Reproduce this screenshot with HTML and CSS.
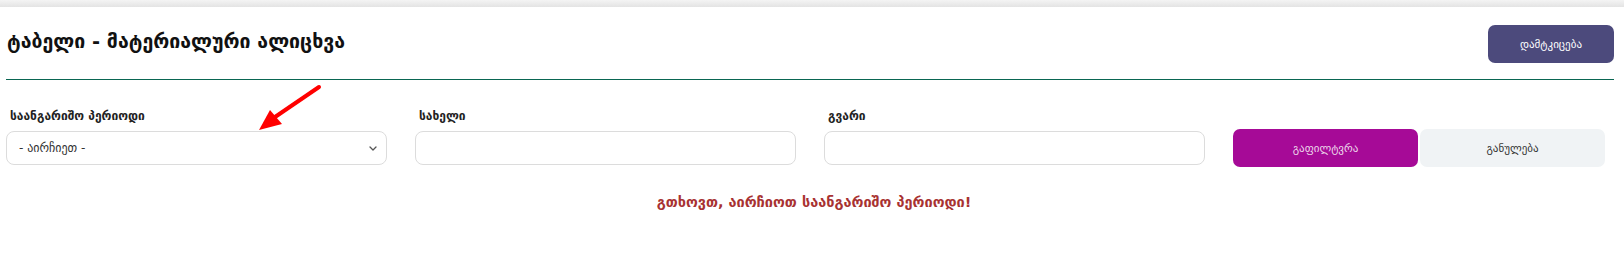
FILE: index.html
```html
<!DOCTYPE html>
<html lang="ka">

<head>
    <meta charset="UTF-8">
    <meta name="viewport" content="width=device-width, initial-scale=1.0">
    <title>ტაბელი - მატერიალური ალიცხვა</title>
    <link rel="stylesheet" href="styles.css">
</head>

<body>
    <div class="top-shade"></div>

    <div class="container">
        <div class="page-header">
            <h2 class="page-title">ტაბელი - მატერიალური ალიცხვა</h2>
            <button class="button confirm">დამტკიცება</button>
        </div>

        <div class="filters">
            <div class="field">
                <label for="period">საანგარიშო პერიოდი</label>
                <div class="select-wrap">
                    <select id="period">
                        <option>- აირჩიეთ -</option>
                    </select>
                    <svg class="chevron" width="8" height="5" viewBox="0 0 8 5" fill="none">
                        <path d="M1 1L4 4L7 1" stroke="#555" stroke-width="1.3" stroke-linecap="round" stroke-linejoin="round" />
                    </svg>
                </div>
            </div>

            <div class="field">
                <label for="first-name">სახელი</label>
                <input type="text" id="first-name">
            </div>

            <div class="field">
                <label for="last-name">გვარი</label>
                <input type="text" id="last-name">
            </div>

            <div class="filter-actions">
                <button class="button filter">გაფილტვრა</button>
                <button class="button reset">განულება</button>
            </div>
        </div>

        <p class="error-message">გთხოვთ, აირჩიოთ საანგარიშო პერიოდი!</p>

        <!-- annotation arrow -->
        <svg class="hint-arrow" width="80" height="60" viewBox="0 0 80 60" fill="none">
            <path d="M70 7L26 37" stroke="#f00" stroke-width="4" stroke-linecap="round" />
            <path d="M10 50L21 30L33 44Z" fill="#f00" />
        </svg>
    </div>
</body>

</html>
```

FILE: styles.css
```css
/* Reset and base styles */
* {
    margin: 0;
    padding: 0;
    box-sizing: border-box;
    font-family: 'DejaVu Sans', 'Noto Sans', sans-serif;
}

body {
    background-color: #fff;
    color: #222;
}

.top-shade {
    height: 7px;
    background: linear-gradient(#f4f4f4, #e3e3e3);
}

/* Container styles */
.container {
    position: relative;
    padding: 0 10px 0 6px;
}

/* Header */
.page-header {
    display: flex;
    justify-content: space-between;
    align-items: flex-start;
    padding-top: 18px;
    padding-bottom: 16px;
    border-bottom: 1px solid #0a6652;
}

.page-title {
    font-size: 19.5px;
    font-weight: 700;
    color: #111;
    padding-top: 5px;
    padding-left: 1px;
}

/* Buttons */
.button {
    border: none;
    border-radius: 7px;
    font-size: 11px;
    cursor: pointer;
    text-align: center;
}

.button.confirm {
    width: 126px;
    height: 38px;
    background-color: #4c4a7c;
    color: #fff;
}

.button.filter {
    width: 185px;
    height: 38px;
    background-color: #a60a97;
    color: #ecd6ea;
}

.button.reset {
    width: 185px;
    height: 38px;
    background-color: #f0f3f5;
    color: #333;
}

/* Filters */
.filters {
    display: grid;
    grid-template-columns: 381px 381px 381px 373px;
    column-gap: 28px;
    align-items: end;
    padding-top: 29px;
}

.field label {
    display: block;
    font-size: 12px;
    font-weight: 600;
    color: #222;
    padding-left: 4px;
    margin-bottom: 8px;
}

.field input,
.field select {
    display: block;
    width: 100%;
    height: 34px;
    border: 1px solid #dcdcdc;
    border-radius: 8px;
    background: #fff;
    font-size: 12px;
    color: #333;
    padding: 0 12px;
    appearance: none;
    outline: none;
}

.select-wrap {
    position: relative;
}

.chevron {
    position: absolute;
    right: 10px;
    top: 15px;
}

.filter-actions {
    display: flex;
    gap: 2px;
    margin-bottom: -2px;
}

.error-message {
    text-align: center;
    font-size: 14.5px;
    font-weight: 700;
    color: #a83232;
    margin-top: 29px;
    padding-left: 8px;
}

.hint-arrow {
    position: absolute;
    left: 249px;
    top: 73px;
}
```
